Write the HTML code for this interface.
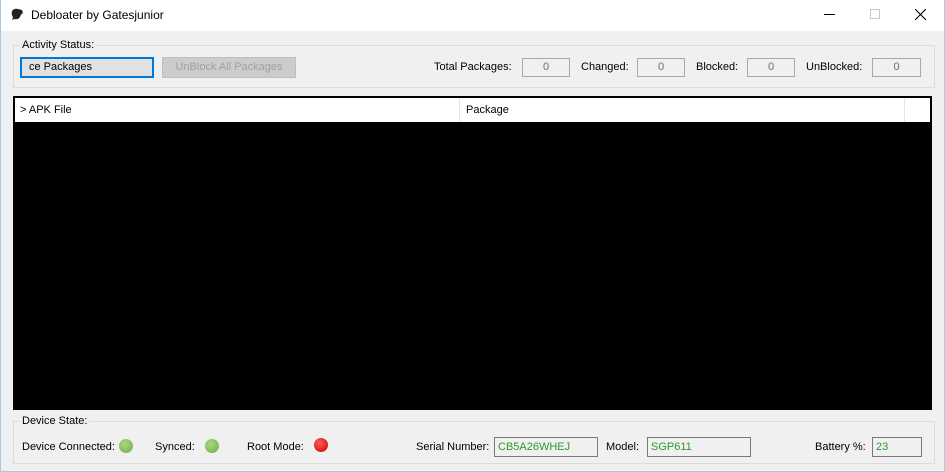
<!DOCTYPE html>
<html><head><style>
*{margin:0;padding:0;box-sizing:border-box}
body{width:945px;height:472px;overflow:hidden;background:#f0f0f0;font-family:"Liberation Sans",sans-serif;font-size:11px;color:#000;position:relative}
.a{position:absolute;white-space:nowrap}
.win{position:absolute;left:0;top:0;width:945px;height:472px;border:1px solid #a9c6e3;border-top:none}
.tb{left:0;top:0;width:945px;height:31px;background:#fff}
.grp{border:1px solid #dcdcdc}
.lbl{background:#f0f0f0;padding:0 2px}
.box{border:1px solid #a8a8a8;background:#f0f0f0;text-align:center;line-height:17px;color:#6d6d6d}
.gbox{border:1px solid #7a7a7a;background:#f0f0f0;color:#2a9a2a;padding-left:3px;line-height:18px}
.dot{width:14px;height:14px;border-radius:50%}
</style></head><body>
<div class="a tb"></div>
<div class="win"></div>
<svg class="a" style="left:10px;top:8px" width="14" height="13" viewBox="0 0 14 13"><path d="M2 3 Q4 0 8 1 L12 2 L13 5 Q11 6 10 9 Q8 12 4 11 L2 12 L3 9 Q1 7 2 3Z" fill="#222"/></svg>
<div class="a" style="left:31px;top:8px;font-size:12px">Debloater by Gatesjunior</div>
<div class="a" style="left:824px;top:14px;width:11px;height:1px;background:#000"></div>
<div class="a" style="left:870px;top:9px;width:10px;height:10px;border:1px solid #c8c8c8"></div>
<svg class="a" style="left:915px;top:9px" width="11" height="11"><path d="M0 0L11 11M11 0L0 11" stroke="#000" stroke-width="1.1"/></svg>

<div class="a grp" style="left:13px;top:45px;width:922px;height:43px"></div>
<div class="a lbl" style="left:20px;top:39px">Activity Status:</div>
<div class="a" style="left:20px;top:57px;width:134px;height:21px;border:2px solid #0078d7;background:#e1e1e1;padding-left:7px;line-height:17px">ce Packages</div>
<div class="a" style="left:162px;top:57px;width:134px;height:21px;border:1px solid #bfbfbf;background:#cccccc;color:#a0a0a0;text-align:center;line-height:19px">UnBlock All Packages</div>
<div class="a" style="left:434px;top:61px">Total Packages:</div>
<div class="a box" style="left:522px;top:58px;width:48px;height:19px">0</div>
<div class="a" style="left:581px;top:61px">Changed:</div>
<div class="a box" style="left:637px;top:58px;width:48px;height:19px">0</div>
<div class="a" style="left:696px;top:61px">Blocked:</div>
<div class="a box" style="left:747px;top:58px;width:48px;height:19px">0</div>
<div class="a" style="left:806px;top:61px">UnBlocked:</div>
<div class="a box" style="left:872px;top:58px;width:49px;height:19px">0</div>

<div class="a" style="left:13px;top:96px;width:919px;height:314px;background:#000;border:2px solid #000"></div>
<div class="a" style="left:15px;top:98px;width:915px;height:24px;background:#fff"></div>
<div class="a" style="left:459px;top:98px;width:1px;height:24px;background:#e5e5e5"></div>
<div class="a" style="left:904px;top:98px;width:1px;height:24px;background:#e5e5e5"></div>
<div class="a" style="left:20px;top:104px">&gt; APK File</div>
<div class="a" style="left:466px;top:104px">Package</div>

<div class="a grp" style="left:13px;top:421px;width:922px;height:43px"></div>
<div class="a lbl" style="left:20px;top:415px">Device State:</div>
<div class="a" style="left:22px;top:441px">Device Connected:</div>
<div class="a dot" style="left:119px;top:439px;background:radial-gradient(circle at 40% 35%,#a8d880,#6fae48)"></div>
<div class="a" style="left:155px;top:441px">Synced:</div>
<div class="a dot" style="left:205px;top:439px;background:radial-gradient(circle at 40% 35%,#a8d880,#6fae48)"></div>
<div class="a" style="left:247px;top:441px">Root Mode:</div>
<div class="a dot" style="left:314px;top:438px;background:radial-gradient(circle at 40% 35%,#ff5a5a,#cc0000)"></div>
<div class="a" style="left:416px;top:441px">Serial Number:</div>
<div class="a gbox" style="left:494px;top:437px;width:104px;height:20px">CB5A26WHEJ</div>
<div class="a" style="left:606px;top:441px">Model:</div>
<div class="a gbox" style="left:647px;top:437px;width:104px;height:20px">SGP611</div>
<div class="a" style="left:815px;top:441px">Battery %:</div>
<div class="a gbox" style="left:872px;top:437px;width:50px;height:20px">23</div>
</body></html>
